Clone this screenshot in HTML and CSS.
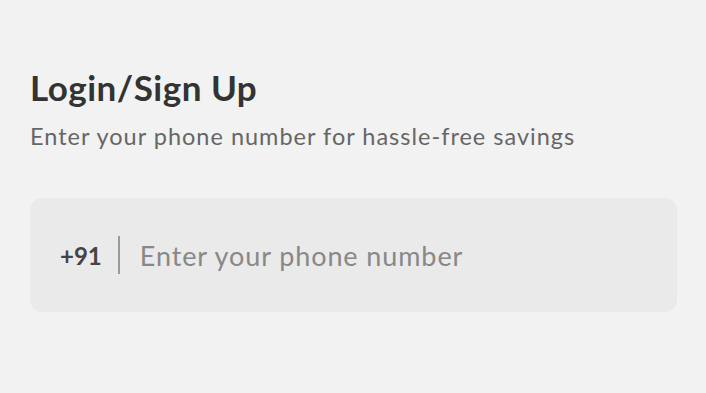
FILE: index.html
```html
<!DOCTYPE html>
<html lang="en">
<head>
<meta charset="utf-8">
<title>Login</title>
<link rel="stylesheet" href="styles.css">
</head>
<body>
<main class="login">
  <h1 class="title">Login/Sign Up</h1>
  <p class="subtitle">Enter your phone number for hassle-free savings</p>
  <label class="phone-field">
    <span class="code">+91</span>
    <span class="divider"></span>
    <input class="phone-input" type="tel" placeholder="Enter your phone number">
  </label>
</main>
</body>
</html>
```
FILE: styles.css
```css
html, body {
  margin: 0;
  padding: 0;
  background: #f2f2f2;
}
body {
  width: 706px;
  height: 393px;
  font-family: "Lato", "Noto Sans", sans-serif;
}
.login {
  padding: 64px 29px 0 30px;
  display: flex;
  flex-direction: column;
}
.title {
  margin: 0;
  font-size: 35px;
  font-weight: 700;
  color: #333333;
  line-height: 46px;
  letter-spacing: 0.5px;
}
.subtitle {
  margin: 11px 0 0;
  font-size: 23.5px;
  font-weight: 400;
  color: #666666;
  line-height: 30px;
  letter-spacing: 1px;
}
.phone-field {
  margin-top: 47px;
  height: 114px;
  background: #eaeaea;
  border-radius: 12px;
  display: flex;
  align-items: center;
  padding: 0 30px;
  box-sizing: border-box;
}
.code {
  font-size: 24px;
  font-weight: 700;
  color: #444444;
}
.divider {
  width: 2px;
  height: 38px;
  background: #9a9a9a;
  margin: 0 20px 0 16px;
}
.phone-input {
  flex: 1;
  border: none;
  background: transparent;
  outline: none;
  font-family: inherit;
  font-size: 27px;
  color: #333;
  padding: 0;
  letter-spacing: 0.9px;
}
.phone-input::placeholder {
  color: #888888;
}
```
